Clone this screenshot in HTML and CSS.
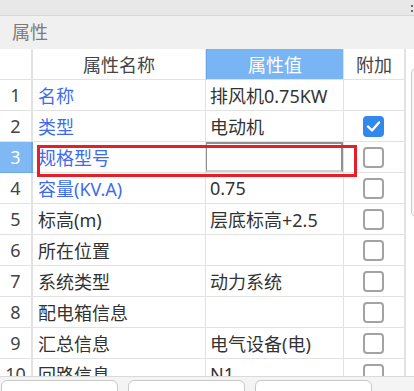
FILE: index.html
```html
<!DOCTYPE html>
<html lang="zh-CN">
<head>
<meta charset="utf-8">
<title>属性</title>
<link rel="stylesheet" href="styles.css">
</head>
<body>
<div class="app">
  <div class="topbar"><span class="grip"></span></div>
  <div class="title">属性</div>
  <div class="main">
    <div class="grid-wrap">
      <div class="grid">
        <div class="c num hd"></div>
        <div class="c hd center">属性名称</div>
        <div class="c hd center val-h">属性值</div>
        <div class="c hd center">附加</div>

        <div class="c num">1</div>
        <div class="c name blue">名称</div>
        <div class="c val">排风机0.75KW</div>
        <div class="c att"></div>

        <div class="c num">2</div>
        <div class="c name blue">类型</div>
        <div class="c val">电动机</div>
        <div class="c att"><span class="cb on"><svg viewBox="0 0 21 21" width="21" height="21"><polyline points="5,10.5 9,14.5 16,6.5" fill="none" stroke="#fff" stroke-width="2.4" stroke-linecap="round" stroke-linejoin="round"/></svg></span></div>

        <div class="c num sel">3</div>
        <div class="c name blue">规格型号</div>
        <div class="c val edit-cell"><span class="edit"></span></div>
        <div class="c att"><span class="cb"></span></div>

        <div class="c num">4</div>
        <div class="c name blue">容量(KV.A)</div>
        <div class="c val">0.75</div>
        <div class="c att"><span class="cb"></span></div>

        <div class="c num">5</div>
        <div class="c name">标高(m)</div>
        <div class="c val">层底标高+2.5</div>
        <div class="c att"><span class="cb"></span></div>

        <div class="c num">6</div>
        <div class="c name">所在位置</div>
        <div class="c val"></div>
        <div class="c att"><span class="cb"></span></div>

        <div class="c num">7</div>
        <div class="c name">系统类型</div>
        <div class="c val">动力系统</div>
        <div class="c att"><span class="cb"></span></div>

        <div class="c num">8</div>
        <div class="c name">配电箱信息</div>
        <div class="c val"></div>
        <div class="c att"><span class="cb"></span></div>

        <div class="c num">9</div>
        <div class="c name">汇总信息</div>
        <div class="c val">电气设备(电)</div>
        <div class="c att"><span class="cb"></span></div>

        <div class="c num">10</div>
        <div class="c name">回路信息</div>
        <div class="c val">N1</div>
        <div class="c att"><span class="cb"></span></div>
      </div>
      <div class="annot"></div>
    </div>
    <div class="vscroll"><div class="thumb"></div></div>
  </div>
  <div class="bottombar">
    <div class="btn"></div>
    <div class="btn"></div>
    <div class="btn"></div>
  </div>
</div>
</body>
</html>
```

FILE: styles.css
```css
* { box-sizing: border-box; }
html, body { margin: 0; padding: 0; }
body {
  width: 414px;
  height: 391px;
  overflow: hidden;
  background: #f0f0f0;
  font-family: "Noto Sans", "Noto Sans CJK SC", sans-serif;
  font-size: 18px;
  color: #333;
}
.app {
  display: flex;
  flex-direction: column;
  height: 391px;
}
.topbar {
  height: 16px;
  flex: none;
  background: #e8e8e8;
  border-bottom: 1px solid #d8d8d8;
  display: flex;
  justify-content: flex-end;
  padding-top: 5px;
}
.grip {
  width: 2px;
  height: 7px;
  margin-right: 1px;
  background: linear-gradient(#6a6a6a 0 2px, transparent 2px 5px, #6a6a6a 5px 7px);
}
.title {
  height: 33px;
  flex: none;
  padding-left: 12px;
  line-height: 33px;
  color: #7c7c7c;
  background: #f0f0f0;
}
.main {
  height: 327px;
  flex: none;
  display: flex;
  overflow: hidden;
}
.grid-wrap {
  position: relative;
  width: 405px;
  flex: none;
  background: #fff;
  overflow: hidden;
}
.grid {
  display: grid;
  grid-template-columns: 33px 173px 138px 61px;
  grid-auto-rows: 31px;
}
.c {
  display: flex;
  align-items: center;
  border-right: 1px solid #e2e2e2;
  border-bottom: 1px solid #e2e2e2;
  background: #fff;
  white-space: nowrap;
  overflow: hidden;
}
.hd { color: #444; }
.center { justify-content: center; }
.val-h {
  background: #79b4f5;
  color: #fff;
  border-left: 1px solid #6aa6ea;
}
.num {
  justify-content: center;
  border-right: 2px solid #e2e2e2;
  color: #444;
}
.num.sel {
  background: #7fb8f3;
  color: #fff;
  border-color: #6aa8ec;
}
.name { padding-left: 5px; }
.blue { color: #3e6cf0; }
.val { padding-left: 4px; }
.att { justify-content: center; padding-right: 1px; }
.edit-cell { padding: 0; align-items: stretch; }
.edit {
  flex: 1;
  margin-left: -1px;
  border: 2px solid #8f8f8f;
  border-bottom-color: #cfcfcf;
}
.cb {
  width: 21px;
  height: 21px;
  border: 2px solid #a3a3a3;
  border-radius: 4px;
  background: #fff;
  display: block;
}
.cb.on {
  background: #3388ec;
  border-color: #3388ec;
  position: relative;
}
.cb.on svg {
  position: absolute;
  left: -2px;
  top: -2px;
}
.annot {
  position: absolute;
  left: 37px;
  top: 96px;
  width: 320px;
  height: 32px;
  border: 3px solid #e61e27;
}
.vscroll {
  flex: 1;
  background: #fff;
  padding-top: 19px;
  padding-left: 5px;
  border-left: 1px solid #e2e2e2;
}
.thumb {
  width: 12px;
  height: 149px;
  border: 1px solid #c9c9c9;
  border-radius: 5px;
  background: #f7f7f7;
}
.bottombar {
  flex: 1;
  background: #f4f4f4;
  border-top: 1px solid #dadada;
  display: flex;
  gap: 10px;
  padding: 3px 0 0 1px;
  overflow: hidden;
}
.btn {
  width: 117px;
  height: 24px;
  flex: none;
  background: #fff;
  border: 1px solid #c8c8c8;
  border-radius: 6px;
}
```
